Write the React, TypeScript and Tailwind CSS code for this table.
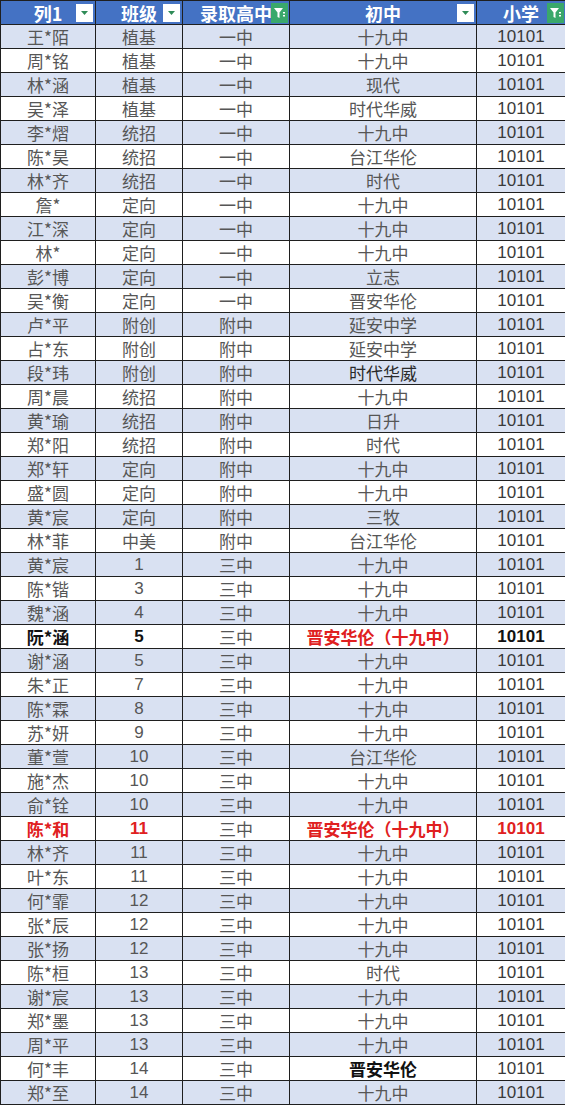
import React from 'react';

type Row = {
  name: string;
  cls: string;
  high: string;
  middle: string;
  style?: 'bold' | 'red' | 'sans' | 'boldMiddle';
};

const rows: Row[] = [
  { name: '王*陌', cls: '植基', high: '一中', middle: '十九中' },
  { name: '周*铭', cls: '植基', high: '一中', middle: '十九中' },
  { name: '林*涵', cls: '植基', high: '一中', middle: '现代' },
  { name: '吴*泽', cls: '植基', high: '一中', middle: '时代华威' },
  { name: '李*熠', cls: '统招', high: '一中', middle: '十九中' },
  { name: '陈*昊', cls: '统招', high: '一中', middle: '台江华伦' },
  { name: '林*齐', cls: '统招', high: '一中', middle: '时代' },
  { name: '詹*', cls: '定向', high: '一中', middle: '十九中' },
  { name: '江*深', cls: '定向', high: '一中', middle: '十九中' },
  { name: '林*', cls: '定向', high: '一中', middle: '十九中' },
  { name: '彭*博', cls: '定向', high: '一中', middle: '立志' },
  { name: '吴*衡', cls: '定向', high: '一中', middle: '晋安华伦' },
  { name: '卢*平', cls: '附创', high: '附中', middle: '延安中学' },
  { name: '占*东', cls: '附创', high: '附中', middle: '延安中学' },
  { name: '段*玮', cls: '附创', high: '附中', middle: '时代华威', style: 'sans' },
  { name: '周*晨', cls: '统招', high: '附中', middle: '十九中' },
  { name: '黄*瑜', cls: '统招', high: '附中', middle: '日升' },
  { name: '郑*阳', cls: '统招', high: '附中', middle: '时代' },
  { name: '郑*轩', cls: '定向', high: '附中', middle: '十九中' },
  { name: '盛*圆', cls: '定向', high: '附中', middle: '十九中' },
  { name: '黄*宸', cls: '定向', high: '附中', middle: '三牧' },
  { name: '林*菲', cls: '中美', high: '附中', middle: '台江华伦' },
  { name: '黄*宸', cls: '1', high: '三中', middle: '十九中' },
  { name: '陈*锴', cls: '3', high: '三中', middle: '十九中' },
  { name: '魏*涵', cls: '4', high: '三中', middle: '十九中' },
  { name: '阮*涵', cls: '5', high: '三中', middle: '晋安华伦（十九中）', style: 'bold' },
  { name: '谢*涵', cls: '5', high: '三中', middle: '十九中' },
  { name: '朱*正', cls: '7', high: '三中', middle: '十九中' },
  { name: '陈*霖', cls: '8', high: '三中', middle: '十九中' },
  { name: '苏*妍', cls: '9', high: '三中', middle: '十九中' },
  { name: '董*萱', cls: '10', high: '三中', middle: '台江华伦' },
  { name: '施*杰', cls: '10', high: '三中', middle: '十九中' },
  { name: '俞*铨', cls: '10', high: '三中', middle: '十九中' },
  { name: '陈*和', cls: '11', high: '三中', middle: '晋安华伦（十九中）', style: 'red' },
  { name: '林*齐', cls: '11', high: '三中', middle: '十九中' },
  { name: '叶*东', cls: '11', high: '三中', middle: '十九中' },
  { name: '何*霏', cls: '12', high: '三中', middle: '十九中' },
  { name: '张*辰', cls: '12', high: '三中', middle: '十九中' },
  { name: '张*扬', cls: '12', high: '三中', middle: '十九中' },
  { name: '陈*桓', cls: '13', high: '三中', middle: '时代' },
  { name: '谢*宸', cls: '13', high: '三中', middle: '十九中' },
  { name: '郑*墨', cls: '13', high: '三中', middle: '十九中' },
  { name: '周*平', cls: '13', high: '三中', middle: '十九中' },
  { name: '何*丰', cls: '14', high: '三中', middle: '晋安华伦', style: 'boldMiddle' },
  { name: '郑*至', cls: '14', high: '三中', middle: '十九中' },
];

function DropButton() {
  return (
    <span className="absolute right-[2px] top-[3px] w-[17px] h-[18px] bg-white flex items-center justify-center">
      <svg width="9" height="6" viewBox="0 0 9 6">
        <path d="M1 1 L8 1 L4.5 5 Z" fill="#2e8b57" />
      </svg>
    </span>
  );
}

function FilterButton() {
  return (
    <span className="absolute right-[1px] top-[2px] w-[17px] h-[20px] bg-[#3aa86b] flex items-center justify-center">
      <svg width="13" height="12" viewBox="0 0 13 12">
        <path d="M1 1 H10 L6.5 5.5 V11 L4.5 10 V5.5 Z" fill="white" />
        <rect x="10" y="5" width="2" height="1.5" fill="white" />
        <rect x="10" y="8" width="2" height="1.5" fill="white" />
      </svg>
    </span>
  );
}

const serif = "font-['Noto_Sans_CJK_SC',sans-serif]";
const num = "font-['Liberation_Sans',sans-serif]";

export default function App() {
  return (
    <div className="w-[565px] h-[1106px] overflow-hidden bg-white">
      <table className="table-fixed border-collapse w-[565px]">
        <colgroup>
          <col className="w-[95px]" />
          <col className="w-[87px]" />
          <col className="w-[107px]" />
          <col className="w-[187px]" />
          <col className="w-[89px]" />
        </colgroup>
        <thead>
          <tr className="h-[24px] bg-[#4472c4] text-white">
            {[
              { label: '列1', filter: false },
              { label: '班级', filter: false },
              { label: '录取高中', filter: true },
              { label: '初中', filter: false },
              { label: '小学', filter: true },
            ].map((h) => (
              <th
                key={h.label}
                className={`relative p-0 border border-[#1f1f1f] text-[18px] font-bold leading-[22px] overflow-hidden whitespace-nowrap ${serif}`}
              >
                <span className="block text-center">{h.label}</span>
                {h.filter ? <FilterButton /> : <DropButton />}
              </th>
            ))}
          </tr>
        </thead>
        <tbody>
          {rows.map((r, i) => {
            const bg = i % 2 === 0 ? 'bg-[#d9e1f2]' : 'bg-white';
            const base = 'p-0 border border-[#1f1f1f] text-center leading-[22px] whitespace-nowrap overflow-hidden';
            const isBold = r.style === 'bold';
            const isRed = r.style === 'red';
            const strong = isBold ? 'font-bold text-[#111]' : isRed ? 'font-bold text-[#e02020]' : 'text-[#565656]';
            let middleCls = 'text-[#565656]';
            if (isBold || isRed) middleCls = 'font-bold text-[#e02020]';
            if (r.style === 'boldMiddle') middleCls = 'font-bold text-[#111]';
            if (r.style === 'sans') middleCls = 'text-[#2a2a2a]';
            return (
              <tr key={`${r.name}-${i}`} className={`h-[24px] ${bg}`}>
                <td className={`${base} ${serif} text-[17px] ${strong}`}>{r.name}</td>
                <td className={`${base} text-[17px] ${/^\d+$/.test(r.cls) ? num : serif} ${strong}`}>{r.cls}</td>
                <td className={`${base} ${serif} text-[17px] text-[#565656]`}>{r.high}</td>
                <td className={`${base} ${serif} text-[17px] ${middleCls}`}>{r.middle}</td>
                <td className={`${base} ${num} text-[17px] ${isBold ? 'font-bold text-[#111]' : isRed ? 'font-bold text-[#e02020]' : 'text-[#3a3a3a]'}`}>
                  10101
                </td>
              </tr>
            );
          })}
        </tbody>
      </table>
    </div>
  );
}
